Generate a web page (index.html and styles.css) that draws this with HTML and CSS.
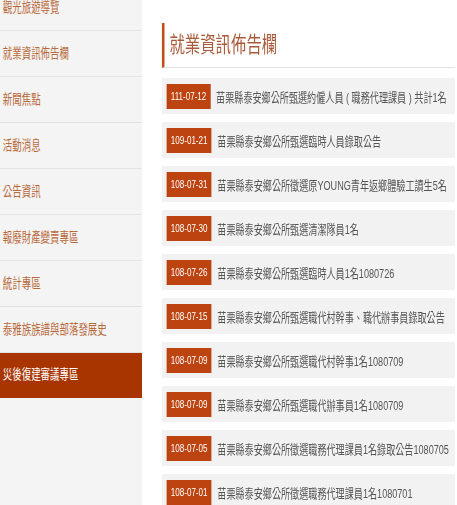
FILE: index.html
```html
<!DOCTYPE html>
<html lang="zh-Hant">
<head>
<meta charset="utf-8">
<title>就業資訊佈告欄</title>
<link rel="stylesheet" href="styles.css">
</head>
<body>
<div class="page">
  <nav class="sidebar">
    <ul class="menu">
      <li class="menu-item">觀光旅遊導覽</li>
      <li class="menu-item">就業資訊佈告欄</li>
      <li class="menu-item">新聞焦點</li>
      <li class="menu-item">活動消息</li>
      <li class="menu-item">公告資訊</li>
      <li class="menu-item">報廢財產變賣專區</li>
      <li class="menu-item">統計專區</li>
      <li class="menu-item">泰雅族族譜與部落發展史</li>
      <li class="menu-item active">災後復建審議專區</li>
    </ul>
  </nav>
  <main class="main">
    <h1 class="title">就業資訊佈告欄</h1>
    <ul class="news">
      <li class="news-item"><span class="date">111-07-12</span><span class="text">苗栗縣泰安鄉公所甄選約僱人員 ( 職務代理課員 ) 共計1名</span></li>
      <li class="news-item"><span class="date">109-01-21</span><span class="text">苗栗縣泰安鄉公所甄選臨時人員錄取公告</span></li>
      <li class="news-item"><span class="date">108-07-31</span><span class="text">苗栗縣泰安鄉公所徵選原YOUNG青年返鄉體驗工讀生5名</span></li>
      <li class="news-item"><span class="date">108-07-30</span><span class="text">苗栗縣泰安鄉公所甄選清潔隊員1名</span></li>
      <li class="news-item"><span class="date">108-07-26</span><span class="text">苗栗縣泰安鄉公所甄選臨時人員1名1080726</span></li>
      <li class="news-item"><span class="date">108-07-15</span><span class="text">苗栗縣泰安鄉公所甄選職代村幹事、職代辦事員錄取公告</span></li>
      <li class="news-item"><span class="date">108-07-09</span><span class="text">苗栗縣泰安鄉公所甄選職代村幹事1名1080709</span></li>
      <li class="news-item"><span class="date">108-07-09</span><span class="text">苗栗縣泰安鄉公所甄選職代辦事員1名1080709</span></li>
      <li class="news-item"><span class="date">108-07-05</span><span class="text">苗栗縣泰安鄉公所徵選職務代理課員1名錄取公告1080705</span></li>
      <li class="news-item"><span class="date">108-07-01</span><span class="text">苗栗縣泰安鄉公所徵選職務代理課員1名1080701</span></li>
    </ul>
  </main>
</div>
</body>
</html>
```
FILE: styles.css
```css
html, body {
  margin: 0;
  padding: 0;
  background: #ffffff;
  overflow: hidden;
  height: 505px;
}

body {
  font-family: "Liberation Sans", "Noto Sans CJK TC", sans-serif;
}

.page {
  display: flex;
  width: 650px;
  height: 505px;
  overflow: hidden;
  transform: scaleX(0.7);
  transform-origin: 0 0;
}

.sidebar {
  width: 203px;
  flex: none;
  background: #f4f4f4;
  overflow: hidden;
}

.menu {
  list-style: none;
  margin: -15px 0 0 0;
  padding: 0;
}

.menu-item {
  height: 45px;
  line-height: 45px;
  border-bottom: 1px solid #e3e3e3;
  padding-left: 4px;
  font-size: 13.5px;
  color: #b8693a;
  white-space: nowrap;
}

.menu-item.active {
  background: #a83400;
  color: #ffffff;
  border-bottom-color: #a83400;
  height: 44px;
  line-height: 44px;
}

.main {
  margin-left: 28px;
  flex: 1;
  min-width: 0;
}

.title {
  margin: 23px 0 0 0;
  height: 44px;
  line-height: 44px;
  padding-left: 7px;
  border-left: 4px solid #c0501b;
  border-bottom: 1px solid #e2e2e2;
  font-size: 22px;
  font-weight: normal;
  color: #a95a3a;
}

.news {
  list-style: none;
  margin: 10px 0 0 0;
  padding: 0;
}

.news-item {
  display: flex;
  align-items: center;
  gap: 8px;
  height: 36px;
  margin-bottom: 8px;
  padding-left: 7px;
  background: #f2f2f2;
  white-space: nowrap;
  overflow: hidden;
}

.date {
  display: inline-block;
  flex: none;
  height: 25px;
  line-height: 25px;
  padding: 0 6px;
  background: #bd4410;
  color: #ffffff;
  font-size: 11.5px;
}

.text {
  font-size: 13px;
  color: #555555;
}
```
